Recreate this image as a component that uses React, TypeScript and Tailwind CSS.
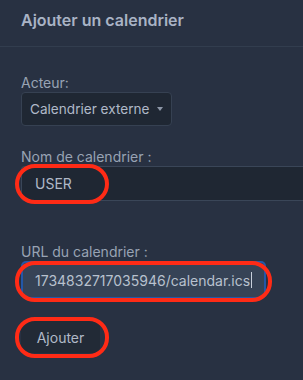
export default function App() {
    return (
        <div className="relative w-[303px] h-[380px] overflow-hidden bg-[#283142] font-['Inter',sans-serif]">
            {/* Header */}
            <div className="h-[47px] px-[21px] pt-[9px] border-b border-[#323d4e]">
                <h1 className="text-[16px] leading-[22px] font-semibold text-[#a9b3c5]">Ajouter un calendrier</h1>
            </div>

            <div className="flex flex-col items-start px-[21px] pt-[26px]">
                {/* Acteur */}
                <div className="h-[19px] text-[14px] leading-[19px] text-[#98a3b4]">Acteur:</div>
                <div className="w-[151px] h-[34px] flex items-center pl-[8px] pr-[8px] bg-[#1f2733] border border-[#364152] rounded-[4px] text-[13.6px] text-[#b0b9c8]">
                    <span>Calendrier externe</span>
                    <span className="ml-auto w-0 h-0 border-l-[3.5px] border-r-[3.5px] border-t-[4px] border-l-transparent border-r-transparent border-t-[#8d97a7]" />
                </div>

                {/* Nom */}
                <div className="mt-[21px] h-[19px] text-[14px] leading-[19px] text-[#98a3b4]">Nom de calendrier :</div>
                <div className="self-stretch mr-[-21px] h-[35px] flex items-center pl-[13px] bg-[#1f2733] border-t border-b border-l border-[#3a4658] rounded-l-[4px] text-[14px] text-[#b0b9c8]">
                    USER
                </div>

                {/* URL */}
                <div className="mt-[41px] h-[19px] text-[14px] leading-[19px] text-[#98a3b4]">URL du calendrier :</div>
                <div className="w-[245px] h-[38px] p-[2px] bg-[#2357a8] rounded-[5px]">
                    <div className="h-full flex items-center pl-[12px] bg-[#364356] rounded-[3px] text-[14px] text-[#b8c1ce]">
                        <span>1734832717035946/calendar.ics</span>
                        <span className="ml-[1px] w-px h-[16px] bg-[#c8d0dc]" />
                    </div>
                </div>

                {/* Button */}
                <button className="mt-[22px] w-[79px] h-[32px] bg-[#222a36] rounded-[6px] text-[14px] text-[#b0b9c8]">
                    Ajouter
                </button>
            </div>

            {/* Annotations */}
            <div className="absolute left-[15px] top-[164px] w-[94px] h-[40px] border-[4px] border-[#ff2b16] rounded-[20px]" />
            <div className="absolute left-[15px] top-[261px] w-[257px] h-[41px] border-[4px] border-[#ff2b16] rounded-[20px]" />
            <div className="absolute left-[15px] top-[317px] w-[94px] h-[41px] border-[4px] border-[#ff2b16] rounded-[20px]" />
        </div>
    );
}
